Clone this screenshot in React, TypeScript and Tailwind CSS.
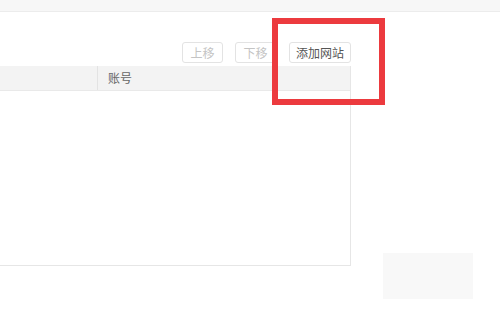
import React from 'react'

const font = { fontFamily: '"Noto Sans CJK SC", "Microsoft YaHei", sans-serif' }

const Btn = ({ label, disabled, wide }: { label: string; disabled?: boolean; wide?: boolean }) => (
  <button
    className={
      (wide ? 'w-[62px] ' : 'w-[41px] ') +
      'h-[21px] rounded-[3px] border border-[#e3e3e3] bg-white text-[12px] leading-none ' +
      (disabled ? 'text-[#c4c4c4]' : 'text-[#555]')
    }
  >
    {label}
  </button>
)

export default function App() {
  return (
    <div className="relative h-[309px] w-[500px] overflow-hidden bg-white" style={font}>
      {/* top strip */}
      <div className="h-[12px] border-b border-[#ececec] bg-[#f7f7f7]" />

      {/* toolbar */}
      <div className="flex w-[351px] justify-end gap-[13px] pt-[30px]">
        <div className="flex gap-[12px]">
          <Btn label="上移" disabled />
          <Btn label="下移" disabled />
        </div>
        <Btn label="添加网站" wide />
      </div>

      {/* table */}
      <div className="mt-[3px] h-[200px] w-[351px] border-b border-r border-[#e6e6e6]">
        <div className="flex h-[25px] border-b border-[#e9e9e9] bg-[#f3f3f3] text-[12px] text-[#666]">
          <div className="w-[98px] border-r border-[#e3e3e3]" />
          <div className="flex items-center pl-[10px]">账号</div>
        </div>
      </div>

      {/* red highlight */}
      <div className="pointer-events-none absolute left-[272px] top-[18px] h-[87px] w-[113px] border-[6px] border-[#ec3a3e]" />

      {/* faint block */}
      <div className="absolute left-[383px] top-[253px] h-[46px] w-[90px] bg-[#f8f8f8]" />
    </div>
  )
}
